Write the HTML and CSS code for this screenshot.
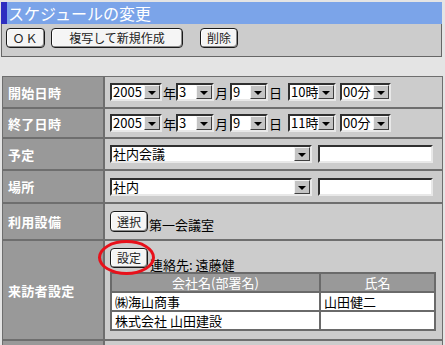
FILE: index.html
```html
<!DOCTYPE html>
<html lang="ja">
<head>
<meta charset="utf-8">
<title>スケジュールの変更</title>
<link rel="stylesheet" href="styles.css">
</head>
<body>
<div class="page">
  <div class="title">スケジュールの変更</div>
  <div class="toolbar">
    <button class="btn b-ok">ＯＫ</button>
    <button class="btn b-copy">複写して新規作成</button>
    <button class="btn b-del">削除</button>
  </div>
  <div class="form">
    <div class="lbl">開始日時</div>
    <div class="val dt">
      <span class="sel w-y"><span class="txt">2005</span><span class="arr"></span></span>
      <span class="u u1">年</span>
      <span class="sel w-m"><span class="txt">3</span><span class="arr"></span></span>
      <span class="u u2">月</span>
      <span class="sel w-m"><span class="txt">9</span><span class="arr"></span></span>
      <span class="u u1">日</span>
      <span class="sel w-h"><span class="txt">10時</span><span class="arr"></span></span>
      <span class="sel w-mi"><span class="txt">00分</span><span class="arr"></span></span>
    </div>
    <div class="lbl">終了日時</div>
    <div class="val dt">
      <span class="sel w-y"><span class="txt">2005</span><span class="arr"></span></span>
      <span class="u u1">年</span>
      <span class="sel w-m"><span class="txt">3</span><span class="arr"></span></span>
      <span class="u u2">月</span>
      <span class="sel w-m"><span class="txt">9</span><span class="arr"></span></span>
      <span class="u u1">日</span>
      <span class="sel w-h"><span class="txt">11時</span><span class="arr"></span></span>
      <span class="sel w-mi"><span class="txt">00分</span><span class="arr"></span></span>
    </div>
    <div class="lbl">予定</div>
    <div class="val">
      <span class="sel w-big"><span class="txt">社内会議</span><span class="arr"></span></span>
      <span class="inp"></span>
    </div>
    <div class="lbl">場所</div>
    <div class="val">
      <span class="sel w-big"><span class="txt">社内</span><span class="arr"></span></span>
      <span class="inp"></span>
    </div>
    <div class="lbl">利用設備</div>
    <div class="val">
      <span class="pick">
        <button class="btn b-small">選択</button>
        <span class="after">第一会議室</span>
      </span>
    </div>
    <div class="lbl">来訪者設定</div>
    <div class="val vis">
      <div class="pick">
        <span class="mark">
          <button class="btn b-small b-set">設定</button>
          <span class="ring"></span>
        </span>
        <span class="after">連絡先: 遠藤健</span>
      </div>
      <table class="list">
        <thead>
          <tr><th>会社名(部署名)</th><th class="c2">氏名</th></tr>
        </thead>
        <tbody>
          <tr><td>㈱海山商事</td><td>山田健二</td></tr>
          <tr><td>株式会社 山田建設</td><td></td></tr>
        </tbody>
      </table>
    </div>
    <div class="lbl"></div>
    <div class="val"></div>
  </div>
</div>
</body>
</html>
```

FILE: styles.css
```css
html, body {
  margin: 0;
  padding: 0;
}
body {
  background: #e4e4e4;
  font-family: "Noto Sans CJK JP", "DejaVu Sans", sans-serif;
  font-size: 13px;
  line-height: 1;
  color: #000;
  overflow: hidden;
}
.page {
  width: 441px;
  margin-left: 1px;
  padding-top: 2px;
}
.title {
  height: 22px;
  background: #7ba4e9;
  border-left: 6px solid #2e2ec0;
  color: #fff;
  font-size: 16px;
  line-height: 22px;
  padding-left: 1px;
  white-space: nowrap;
}
.toolbar {
  background: #cccccc;
  border: 1px solid #666;
  border-top: none;
  display: flex;
  align-items: flex-start;
  padding: 4px 0 0 4px;
  box-sizing: border-box;
  height: 33px;
}
.btn {
  font-family: "Noto Sans CJK JP", sans-serif;
  font-size: 12px;
  line-height: 1;
  color: #222;
  background: #f5f5f5;
  border: 1px solid #1a1a1a;
  border-radius: 4px;
  box-shadow: inset -1px -1px 0 #8c8c8c, inset 1px 1px 0 #fff;
  padding: 0;
  height: 20px;
  margin: 0;
}
.b-ok { width: 39px; letter-spacing: 1px; }
.b-copy { width: 132px; margin-left: 6px; }
.b-del { width: 38px; margin-left: 17px; }
.form {
  margin-top: 19px;
  margin-left: 1px;
  width: 439px;
  display: grid;
  grid-template-columns: 100px 1fr;
  grid-template-rows: 30px 28px 30px 31px 35px 98px 40px;
  gap: 2px;
  background: #6e6e6e;
  border: 1px solid #6e6e6e;
  border-bottom: none;
}
.lbl {
  background: #999999;
  color: #fff;
  font-weight: bold;
  font-size: 13px;
  display: flex;
  align-items: center;
  padding-left: 5px;
  letter-spacing: 0.3px;
}
.val {
  background: #cccccc;
  display: flex;
  align-items: center;
  padding-left: 5px;
}
.sel {
  display: inline-flex;
  box-sizing: border-box;
  height: 18px;
  border: 2px solid;
  border-color: #303030 #e8e8e8 #e8e8e8 #303030;
  background: #fff;
  align-items: stretch;
  flex: none;
}
.sel .txt {
  flex: 1;
  font-size: 13px;
  line-height: 14px;
  padding-left: 1px;
  white-space: nowrap;
}
.sel .arr {
  width: 16px;
  flex: none;
  box-sizing: border-box;
  background: #c4c4c4;
  border: 1px solid;
  border-color: #f4f4f4 #404040 #404040 #f4f4f4;
  position: relative;
}
.sel .arr::after {
  content: "";
  position: absolute;
  left: 3px;
  top: 5px;
  border-left: 4px solid transparent;
  border-right: 4px solid transparent;
  border-top: 4px solid #000;
}
.w-y { width: 52px; }
.w-m { width: 38px; }
.w-h { width: 48px; margin-left: 6px; }
.w-mi { width: 51px; margin-left: 4px; }
.w-big { width: 202px; }
.u {
  font-size: 13px;
  width: 13px;
  margin-left: 1px;
  flex: none;
}
.u2 { margin-right: 2px; }
.inp {
  display: inline-block;
  box-sizing: border-box;
  width: 115px;
  height: 18px;
  margin-left: 6px;
  background: #fff;
  border: 2px solid;
  border-color: #303030 #e8e8e8 #e8e8e8 #303030;
}
.pick {
  display: flex;
  align-items: flex-end;
}
.b-small {
  width: 38px;
  height: 21px;
  font-size: 12px;
}
.b-set { height: 20px; }
.after {
  font-size: 13px;
  margin-left: 1px;
  line-height: 14px;
  white-space: nowrap;
}
.vis {
  flex-direction: column;
  align-items: flex-start;
  justify-content: flex-start;
  padding-top: 7px;
}
.vis .pick .after {
  margin-left: 2px;
  margin-bottom: -4px;
}
.mark {
  position: relative;
  display: inline-flex;
}
.ring {
  position: absolute;
  left: -12px;
  top: -8px;
  width: 57px;
  height: 35px;
  box-sizing: border-box;
  border: 3px solid #e8101a;
  border-radius: 50%;
}
.list {
  margin-top: 4px;
  width: 326px;
  border-collapse: collapse;
  border: 2px solid #6a6a6a;
  font-size: 13px;
}
.list th, .list td {
  border: 2px solid #6a6a6a;
  height: 17px;
  padding: 0 3px;
  line-height: 15px;
}
.list th {
  background: #999999;
  color: #fff;
  font-weight: normal;
  text-align: center;
}
.list td {
  background: #fff;
  text-align: left;
}
.list .c2 { width: 107px; }
```
